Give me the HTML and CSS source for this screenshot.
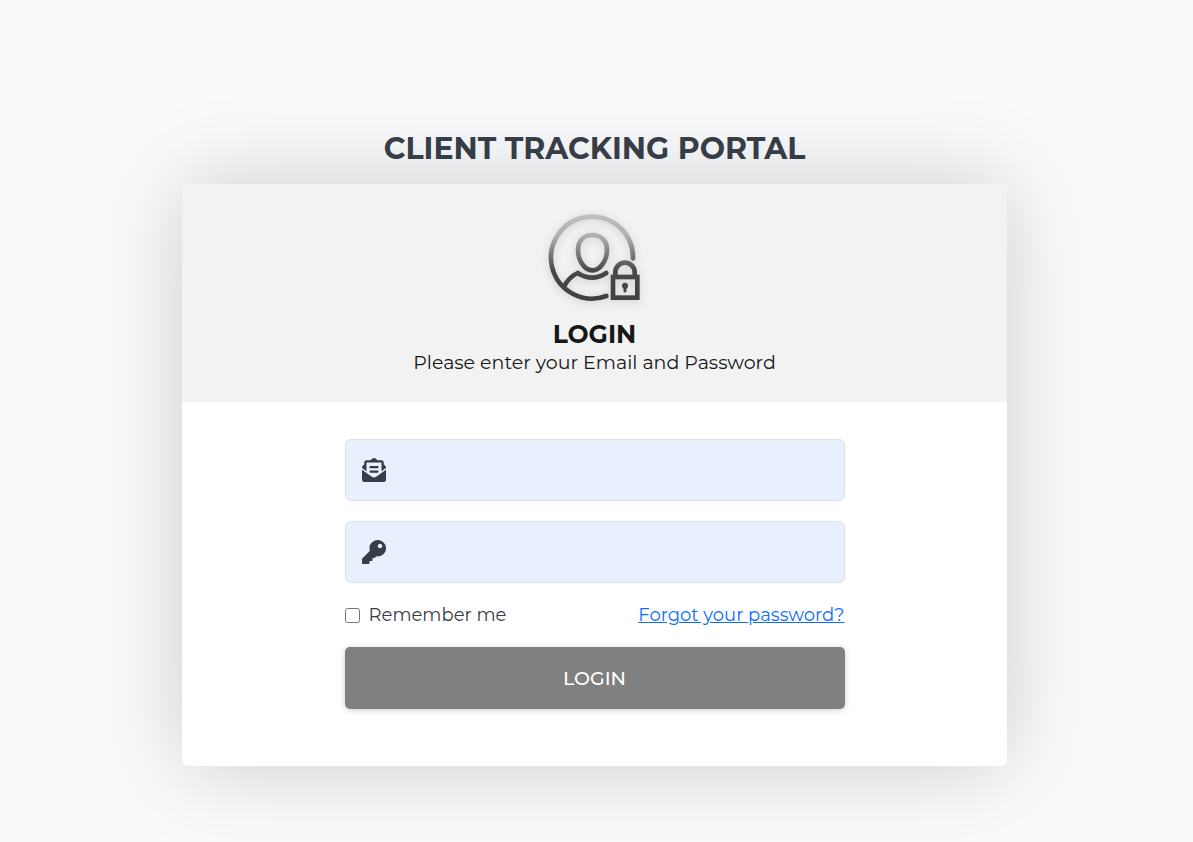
FILE: index.html
```
<!DOCTYPE html>
<html lang="en">
<head>
    <meta charset="UTF-8">
    <meta name="viewport" content="width=device-width, initial-scale=1.0">
    <title>Client Tracking Portal - Login</title>
    <link rel="stylesheet" href="styles.css">
</head>
<body>
    <main class="login-page">
        <h1 class="portal-title">CLIENT TRACKING PORTAL</h1>

        <div class="login-card">
            <div class="login-header">
                <svg class="user-icon" viewBox="36 26 288 276" fill="none" stroke="url(#fade)" stroke-width="14" stroke-linecap="round" aria-hidden="true">
                    <defs>
                        <linearGradient id="fade" gradientUnits="userSpaceOnUse" x1="0" y1="30" x2="0" y2="290">
                            <stop offset="0" stop-color="#c0c0c0"/>
                            <stop offset="0.25" stop-color="#b0b0b0"/>
                            <stop offset="0.65" stop-color="#484848"/>
                            <stop offset="1" stop-color="#404040"/>
                        </linearGradient>
                    </defs>
                    <path d="M294 162A123 123 0 1 0 214 275"/>
                    <path d="M172 92C146 92 129 109 129 137C129 169 149 198 172 198C195 198 216 169 216 137C216 109 198 92 172 92Z"/>
                    <path d="M88 245C97 228 111 214 128 206C157 225 187 224 214 206"/>
                    <path d="M241 214V204A29 29 0 0 1 299 204V214"/>
                    <rect x="234" y="218" width="73" height="62"/>
                    <circle cx="270" cy="244" r="4" stroke-width="10"/>
                    <path d="M270 248V260" stroke-width="9"/>
                </svg>
                <h2>LOGIN</h2>
                <p>Please enter your Email and Password</p>
            </div>

            <form class="login-form" id="login-form">
                <!-- Email -->
                <div class="input-group">
                    <label for="email" aria-label="Email">
                        <svg viewBox="0 0 512 512" aria-hidden="true"><path d="M176 216h160c8.84 0 16-7.16 16-16v-16c0-8.84-7.16-16-16-16H176c-8.84 0-16 7.16-16 16v16c0 8.84 7.16 16 16 16zm-16 80c0 8.84 7.16 16 16 16h160c8.84 0 16-7.16 16-16v-16c0-8.84-7.16-16-16-16H176c-8.84 0-16 7.16-16 16v16zm96 121.13c-16.42 0-32.84-5.06-46.86-15.19L0 250.86V464c0 26.51 21.49 48 48 48h416c26.51 0 48-21.49 48-48V250.86L302.86 401.94c-14.02 10.12-30.44 15.19-46.86 15.19zm237.61-254.18c-8.85-6.94-17.24-13.47-29.61-22.81V96c0-26.51-21.49-48-48-48h-77.55c-3.04-2.2-5.87-4.26-9.04-6.56C312.6 29.17 279.2-.35 256 0c-23.2-.35-56.59 29.17-73.41 41.44-3.17 2.3-6 4.36-9.04 6.56H96c-26.51 0-48 21.49-48 48v44.14c-12.37 9.33-20.76 15.87-29.61 22.81A47.995 47.995 0 0 0 0 200.72v10.65l96 69.35V96h320v184.72l96-69.35v-10.65c0-14.74-6.78-28.67-18.39-37.77z"/></svg>
                    </label>
                    <input type="email" id="email" name="email" required>
                </div>

                <!-- Password -->
                <div class="input-group">
                    <label for="password" aria-label="Password">
                        <svg viewBox="0 0 512 512" aria-hidden="true"><path d="M512 176.001C512 273.203 433.202 352 336 352c-11.22 0-22.19-1.062-32.827-3.069l-24.012 27.014A23.999 23.999 0 0 1 261.223 384H224v40c0 13.255-10.745 24-24 24h-40v40c0 13.255-10.745 24-24 24H24c-13.255 0-24-10.745-24-24v-78.059c0-6.365 2.529-12.47 7.029-16.971l161.802-161.802C163.108 213.814 160 195.271 160 176 160 78.798 238.797.001 335.999 0 433.488-.001 512 78.511 512 176.001zM336 128c0 26.51 21.49 48 48 48s48-21.49 48-48-21.49-48-48-48-48 21.49-48 48z"/></svg>
                    </label>
                    <input type="password" id="password" name="password" required>
                </div>

                <div class="form-options">
                    <div class="remember">
                        <input type="checkbox" id="remember" name="remember">
                        <label for="remember">Remember me</label>
                    </div>
                    <a href="#">Forgot your password?</a>
                </div>

                <button type="submit">LOGIN</button>
            </form>
        </div>
    </main>
</body>
</html>
```
FILE: styles.css
```
* {
    box-sizing: border-box;
}
body {
    margin: 0;
    padding-right: 4px;
    font-family: Montserrat, Inter, sans-serif;
    font-size: 18px;
    color: #363d47;
    background: #f8fafc;
}
.login-page {
    max-width: 825px;
    margin: 0 auto;
    padding: 129px 0 76px;
}
.portal-title {
    margin: 0 0 15px;
    font-size: 30px;
    font-weight: 700;
    line-height: 40px;
    text-align: center;
}
.login-card {
    background: #fff;
    border-radius: 0 0 6px 6px;
    box-shadow: 0 0 90px rgba(0, 0, 0, 0.18);
}
.login-header {
    display: flex;
    flex-direction: column;
    align-items: center;
    padding: 29px 20px 25px;
    color: #151719;
    background: #f2f2f2;
    text-align: center;
}
.user-icon {
    width: 96px;
    height: 92px;
    margin-bottom: 14px;
    filter: drop-shadow(0 2px 4px rgba(0, 0, 0, 0.15));
}
.login-header h2 {
    margin: 0;
    font-size: 25px;
    font-weight: 700;
    line-height: 30px;
}
.login-header p {
    margin: 0;
    font-size: 19px;
    line-height: 28px;
}
.login-form {
    display: flex;
    flex-direction: column;
    gap: 20px;
    max-width: 500px;
    margin: 0 auto;
    padding: 37px 0 57px;
}
.input-group {
    display: flex;
    align-items: center;
    height: 62px;
    background: #e8f0fe;
    border: 1px solid #dce1e8;
    border-radius: 6px;
}
.input-group label {
    padding: 0 16px;
}
.input-group svg {
    display: block;
    width: 24px;
    height: 24px;
    fill: #363d47;
}
.input-group input {
    flex: 1;
    min-width: 0;
    height: 100%;
    padding: 0 16px 0 0;
    font: inherit;
    color: inherit;
    background: transparent;
    border: none;
    outline: none;
}
.form-options {
    display: flex;
    justify-content: space-between;
    align-items: center;
    line-height: 24px;
}
.remember {
    display: flex;
    align-items: center;
    gap: 9px;
}
.remember input {
    width: 15px;
    height: 15px;
    margin: 0;
}
.form-options a {
    color: #0d6efd;
}
button {
    height: 62px;
    font-family: inherit;
    font-size: 19px;
    font-weight: 500;
    color: #fff;
    background: #808080;
    border: none;
    border-radius: 5px;
    box-shadow: 0 1px 6px rgba(0, 0, 0, 0.2);
    cursor: pointer;
}
button:hover {
    background: #6c6c6c;
}
```
